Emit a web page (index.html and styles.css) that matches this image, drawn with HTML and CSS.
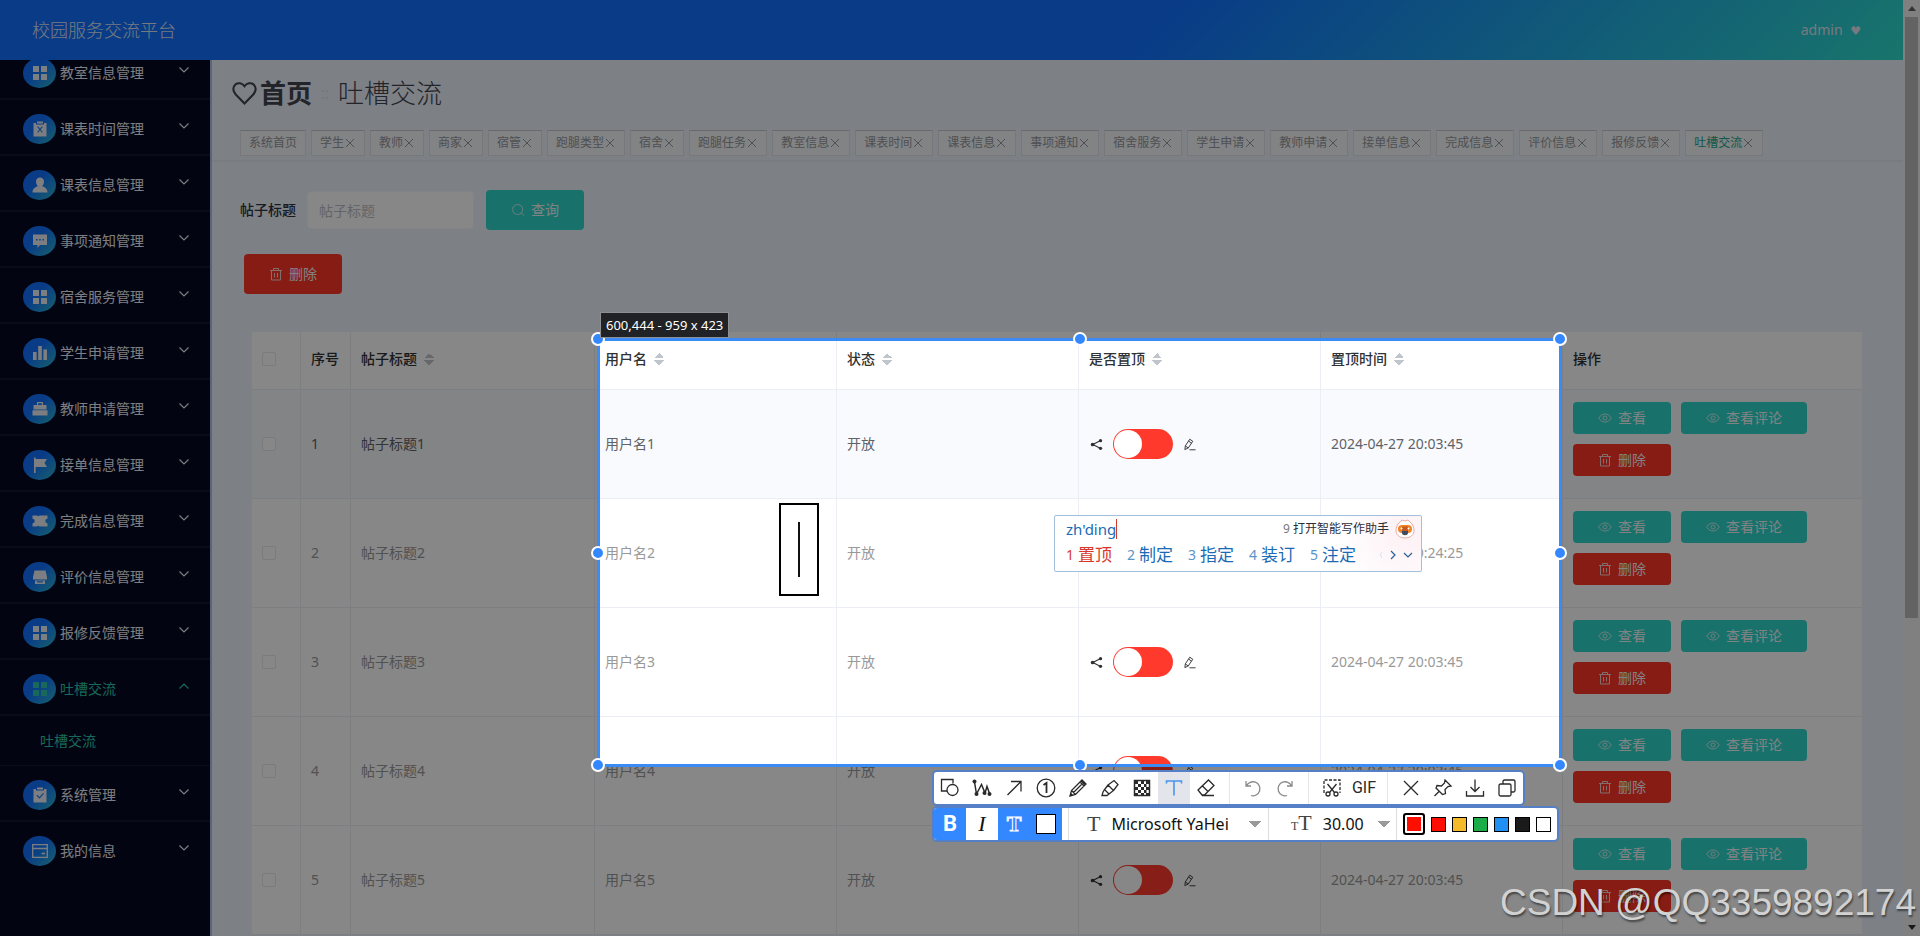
FILE: index.html
```html
<!DOCTYPE html>
<html lang="zh-CN">
<head>
<meta charset="utf-8">
<title>校园服务交流平台</title>
<link rel="stylesheet" href="styles.css">
</head>
<body>
<svg class="sprite" aria-hidden="true">
  <symbol id="i-grid" viewBox="0 0 16 16"><path fill="currentColor" d="M1 1h6v6H1zM9 1h6v6H9zM1 9h6v6H1zM9 9h6v6H9z"/></symbol>
  <symbol id="i-release" viewBox="0 0 16 16"><path fill="currentColor" fill-rule="evenodd" d="M1.500 2H4v1.500h8V2h2.500v13.500h-13zM5 .5h6v2H5zM5.300 6l2 2.500-2 2.500 .8.7L8 9.300l1.900 2.400.8-.7-2-2.500 2-2.500-.8-.7L8 7.700 6.100 5.300z"/></symbol>
  <symbol id="i-user" viewBox="0 0 16 16"><path fill="currentColor" d="M8 .5a4 4 0 0 1 4 4.200C12 7 10.500 9 10 9.300c3 .8 5.500 2.700 5.500 6.200H.5C.5 12 3 10.100 6 9.300 5.500 9 4 7 4 4.700A4 4 0 0 1 8 .5z"/></symbol>
  <symbol id="i-comment" viewBox="0 0 16 16"><path fill="currentColor" fill-rule="evenodd" d="M1 1.500h14V12H8l-2.500 3v-3H1zM4 6v1.500h1.500V6zM7.200 6v1.500h1.600V6zM10.500 6v1.500H12V6z"/></symbol>
  <symbol id="i-data" viewBox="0 0 16 16"><path fill="currentColor" d="M1 7h3.600v8H1zM6.200 1h3.600v14H6.200zM11.400 4.500H15V15h-3.600z"/></symbol>
  <symbol id="i-case" viewBox="0 0 16 16"><path fill="currentColor" fill-rule="evenodd" d="M5 4V1h6v3h3.500v4.500h-13V4zM6.200 4h3.600V2.200H6.200zM.5 9.300h15v5.200H.5z"/></symbol>
  <symbol id="i-flag" viewBox="0 0 16 16"><path fill="currentColor" d="M2 .5h1.600V2H15l-2.500 4L15 10H3.600v6H2z"/></symbol>
  <symbol id="i-ticket" viewBox="0 0 16 16"><path fill="currentColor" fill-rule="evenodd" d="M.5 2.500h4.700l1 1 1-1h8.300v3.300a2.200 2.200 0 0 0 0 4.400v3.300H7.200l-1-1-1 1H.5v-3.300a2.200 2.200 0 0 0 0-4.400z"/></symbol>
  <symbol id="i-shop" viewBox="0 0 16 16"><path fill="currentColor" fill-rule="evenodd" d="M2.500 1.500h11L15 8v2.500H1V8zM3 11.500h10V15H3zM5 12.300v1.200h6v-1.200z"/></symbol>
  <symbol id="i-claim" viewBox="0 0 16 16"><path fill="currentColor" fill-rule="evenodd" d="M1.500 2H4v1.500h8V2h2.500v13.500h-13zM5 .5h6v2H5zM4.400 8.500l3 3.200 4.600-4.900-.9-.8-3.700 4-2.100-2.300z"/></symbol>
  <symbol id="i-card" viewBox="0 0 16 16"><path fill="none" stroke="currentColor" stroke-width="1.300" d="M.7 1.700h14.600v12.600H.7zM.7 5.500h14.600M9.500 10.500h3.500"/></symbol>
  <symbol id="i-down" viewBox="0 0 12 8"><path fill="none" stroke="currentColor" stroke-width="1.200" d="M1.500 1.500L6 6l4.500-4.500"/></symbol>
  <symbol id="i-up" viewBox="0 0 12 8"><path fill="none" stroke="currentColor" stroke-width="1.200" d="M1.500 6.500L6 2l4.500 4.500"/></symbol>
  <symbol id="i-x" viewBox="0 0 12 12"><path fill="none" stroke="currentColor" d="M2 2l8 8M10 2l-8 8"/></symbol>
  <symbol id="i-heart" viewBox="0 0 24 24"><path fill="none" stroke="currentColor" stroke-width="2" d="M12 21.500L3.600 13C.5 9.800.6 5.600 3.300 3.300 6 1.200 9.800 1.900 12 5c2.200-3.100 6-3.800 8.700-1.700 2.700 2.300 2.800 6.500-.3 9.700z"/></symbol>
  <symbol id="i-search" viewBox="0 0 14 14"><path fill="none" stroke="currentColor" d="M10 10.200a5 5 0 1 1 .3-.3l2.700 2.900"/></symbol>
  <symbol id="i-trash" viewBox="0 0 14 14"><path fill="none" stroke="currentColor" d="M1 3.500h12M4.500 3V1.500h5V3M2.500 3.500v9.500h9V3.500M5.500 6v4.500M8.500 6v4.500"/></symbol>
  <symbol id="i-eye" viewBox="0 0 14 14"><path fill="none" stroke="currentColor" d="M.7 7C2.500 4.300 4.500 3 7 3s4.500 1.300 6.300 4C11.500 9.700 9.500 11 7 11S2.500 9.700.7 7zM9 7a2 2 0 1 1-4 0 2 2 0 0 1 4 0z"/></symbol>
  <symbol id="i-share" viewBox="0 0 14 14"><path fill="none" stroke="currentColor" stroke-width="1.200" d="M11.500 2.800L3 7l8.500 4.200"/><circle cx="11.300" cy="2.900" r="1.800" fill="currentColor"/><circle cx="2.800" cy="7" r="2" fill="currentColor"/><circle cx="11.300" cy="11.100" r="1.800" fill="currentColor"/></symbol>
  <symbol id="i-edit" viewBox="0 0 14 14"><path fill="none" stroke="currentColor" d="M2 12.500l.5-4L7.300 1.300 10.500 3.500 5.700 10.700zM6 3.300l3.200 2.200M2.500 8.600L5.700 10.700M7 12.700h6.500"/></symbol>
</svg>

<div class="app">
  <div class="page">
    <header class="topbar">
      <span class="brand">校园服务交流平台</span>
      <button class="account" type="button">admin <span class="account-mark">♥</span></button>
    </header>
    <div class="body">
      <nav class="sidebar" aria-label="主菜单">
        <ul class="menu">
          <li><a class="menu-item" href="#"><span class="badge"><svg><use href="#i-grid"/></svg></span><span>教室信息管理</span><svg class="arrow"><use href="#i-down"/></svg></a></li>
          <li><a class="menu-item" href="#"><span class="badge"><svg><use href="#i-release"/></svg></span><span>课表时间管理</span><svg class="arrow"><use href="#i-down"/></svg></a></li>
          <li><a class="menu-item" href="#"><span class="badge"><svg><use href="#i-user"/></svg></span><span>课表信息管理</span><svg class="arrow"><use href="#i-down"/></svg></a></li>
          <li><a class="menu-item" href="#"><span class="badge"><svg><use href="#i-comment"/></svg></span><span>事项通知管理</span><svg class="arrow"><use href="#i-down"/></svg></a></li>
          <li><a class="menu-item" href="#"><span class="badge"><svg><use href="#i-grid"/></svg></span><span>宿舍服务管理</span><svg class="arrow"><use href="#i-down"/></svg></a></li>
          <li><a class="menu-item" href="#"><span class="badge"><svg><use href="#i-data"/></svg></span><span>学生申请管理</span><svg class="arrow"><use href="#i-down"/></svg></a></li>
          <li><a class="menu-item" href="#"><span class="badge"><svg><use href="#i-case"/></svg></span><span>教师申请管理</span><svg class="arrow"><use href="#i-down"/></svg></a></li>
          <li><a class="menu-item" href="#"><span class="badge"><svg><use href="#i-flag"/></svg></span><span>接单信息管理</span><svg class="arrow"><use href="#i-down"/></svg></a></li>
          <li><a class="menu-item" href="#"><span class="badge"><svg><use href="#i-ticket"/></svg></span><span>完成信息管理</span><svg class="arrow"><use href="#i-down"/></svg></a></li>
          <li><a class="menu-item" href="#"><span class="badge"><svg><use href="#i-shop"/></svg></span><span>评价信息管理</span><svg class="arrow"><use href="#i-down"/></svg></a></li>
          <li><a class="menu-item" href="#"><span class="badge"><svg><use href="#i-grid"/></svg></span><span>报修反馈管理</span><svg class="arrow"><use href="#i-down"/></svg></a></li>
          <li><a class="menu-item is-active" href="#"><span class="badge"><svg><use href="#i-grid"/></svg></span><span>吐槽交流</span><svg class="arrow"><use href="#i-up"/></svg></a>
            <a class="submenu-item" href="#">吐槽交流</a></li>
          <li><a class="menu-item" href="#"><span class="badge"><svg><use href="#i-claim"/></svg></span><span>系统管理</span><svg class="arrow"><use href="#i-down"/></svg></a></li>
          <li><a class="menu-item is-last" href="#"><span class="badge"><svg><use href="#i-card"/></svg></span><span>我的信息</span><svg class="arrow"><use href="#i-down"/></svg></a></li>
        </ul>
      </nav>

      <main class="main">
        <div class="crumbs">
          <svg class="crumb-icon"><use href="#i-heart"/></svg>
          <a class="crumb-home" href="#">首页</a>
          <span class="crumb-sep">::</span>
          <span class="crumb-here">吐槽交流</span>
        </div>
        <div class="tabs">
          <a class="tab" href="#">系统首页</a>
          <a class="tab" href="#">学生<svg><use href="#i-x"/></svg></a>
          <a class="tab" href="#">教师<svg><use href="#i-x"/></svg></a>
          <a class="tab" href="#">商家<svg><use href="#i-x"/></svg></a>
          <a class="tab" href="#">宿管<svg><use href="#i-x"/></svg></a>
          <a class="tab" href="#">跑腿类型<svg><use href="#i-x"/></svg></a>
          <a class="tab" href="#">宿舍<svg><use href="#i-x"/></svg></a>
          <a class="tab" href="#">跑腿任务<svg><use href="#i-x"/></svg></a>
          <a class="tab" href="#">教室信息<svg><use href="#i-x"/></svg></a>
          <a class="tab" href="#">课表时间<svg><use href="#i-x"/></svg></a>
          <a class="tab" href="#">课表信息<svg><use href="#i-x"/></svg></a>
          <a class="tab" href="#">事项通知<svg><use href="#i-x"/></svg></a>
          <a class="tab" href="#">宿舍服务<svg><use href="#i-x"/></svg></a>
          <a class="tab" href="#">学生申请<svg><use href="#i-x"/></svg></a>
          <a class="tab" href="#">教师申请<svg><use href="#i-x"/></svg></a>
          <a class="tab" href="#">接单信息<svg><use href="#i-x"/></svg></a>
          <a class="tab" href="#">完成信息<svg><use href="#i-x"/></svg></a>
          <a class="tab" href="#">评价信息<svg><use href="#i-x"/></svg></a>
          <a class="tab" href="#">报修反馈<svg><use href="#i-x"/></svg></a>
          <a class="tab is-current" href="#">吐槽交流<svg><use href="#i-x"/></svg></a>
        </div>

        <form class="filter">
          <label for="post-title">帖子标题</label>
          <input id="post-title" class="filter-input" type="text" placeholder="帖子标题">
          <button class="btn btn-tall" type="button"><svg><use href="#i-search"/></svg>查询</button>
        </form>
        <div class="bulk">
          <button class="btn btn-tall btn-danger" type="button"><svg><use href="#i-trash"/></svg>删除</button>
        </div>

        <table class="grid">
          <colgroup><col class="c-check"><col class="c-no"><col class="c-title"><col><col><col><col><col class="c-ops"></colgroup>
          <thead>
            <tr>
              <th><input class="check" type="checkbox" aria-label="全选"></th>
              <th>序号</th>
              <th>帖子标题<span class="sort"></span></th>
              <th>用户名<span class="sort"></span></th>
              <th>状态<span class="sort"></span></th>
              <th>是否置顶<span class="sort"></span></th>
              <th>置顶时间<span class="sort"></span></th>
              <th>操作</th>
            </tr>
          </thead>
          <tbody>
            <tr class="is-hover">
              <td><input class="check" type="checkbox" aria-label="选择1"></td><td>1</td><td>帖子标题1</td><td>用户名1</td><td>开放</td>
              <td><div class="pin"><svg><use href="#i-share"/></svg><input class="switch" type="checkbox" role="switch" aria-label="置顶1"><svg><use href="#i-edit"/></svg></div></td>
              <td>2024-04-27 20:03:45</td>
              <td><div class="ops"><button class="btn" type="button"><svg><use href="#i-eye"/></svg>查看</button><button class="btn" type="button"><svg><use href="#i-eye"/></svg>查看评论</button><button class="btn btn-danger" type="button"><svg><use href="#i-trash"/></svg>删除</button></div></td>
            </tr>
            <tr>
              <td><input class="check" type="checkbox" aria-label="选择2"></td><td>2</td><td>帖子标题2</td><td>用户名2</td><td>开放</td>
              <td><div class="pin"><svg><use href="#i-share"/></svg><input class="switch" type="checkbox" role="switch" aria-label="置顶2"><svg><use href="#i-edit"/></svg></div></td>
              <td>2024-04-27 20:24:25</td>
              <td><div class="ops"><button class="btn" type="button"><svg><use href="#i-eye"/></svg>查看</button><button class="btn" type="button"><svg><use href="#i-eye"/></svg>查看评论</button><button class="btn btn-danger" type="button"><svg><use href="#i-trash"/></svg>删除</button></div></td>
            </tr>
            <tr>
              <td><input class="check" type="checkbox" aria-label="选择3"></td><td>3</td><td>帖子标题3</td><td>用户名3</td><td>开放</td>
              <td><div class="pin"><svg><use href="#i-share"/></svg><input class="switch" type="checkbox" role="switch" aria-label="置顶3"><svg><use href="#i-edit"/></svg></div></td>
              <td>2024-04-27 20:03:45</td>
              <td><div class="ops"><button class="btn" type="button"><svg><use href="#i-eye"/></svg>查看</button><button class="btn" type="button"><svg><use href="#i-eye"/></svg>查看评论</button><button class="btn btn-danger" type="button"><svg><use href="#i-trash"/></svg>删除</button></div></td>
            </tr>
            <tr>
              <td><input class="check" type="checkbox" aria-label="选择4"></td><td>4</td><td>帖子标题4</td><td>用户名4</td><td>开放</td>
              <td><div class="pin"><svg><use href="#i-share"/></svg><input class="switch" type="checkbox" role="switch" aria-label="置顶4"><svg><use href="#i-edit"/></svg></div></td>
              <td>2024-04-27 20:03:45</td>
              <td><div class="ops"><button class="btn" type="button"><svg><use href="#i-eye"/></svg>查看</button><button class="btn" type="button"><svg><use href="#i-eye"/></svg>查看评论</button><button class="btn btn-danger" type="button"><svg><use href="#i-trash"/></svg>删除</button></div></td>
            </tr>
            <tr>
              <td><input class="check" type="checkbox" aria-label="选择5"></td><td>5</td><td>帖子标题5</td><td>用户名5</td><td>开放</td>
              <td><div class="pin"><svg><use href="#i-share"/></svg><input class="switch" type="checkbox" role="switch" aria-label="置顶5"><svg><use href="#i-edit"/></svg></div></td>
              <td>2024-04-27 20:03:45</td>
              <td><div class="ops"><button class="btn" type="button"><svg><use href="#i-eye"/></svg>查看</button><button class="btn" type="button"><svg><use href="#i-eye"/></svg>查看评论</button><button class="btn btn-danger" type="button"><svg><use href="#i-trash"/></svg>删除</button></div></td>
            </tr>
          </tbody>
        </table>
      </main>
    </div>
  </div>
  <div class="scrollbar" aria-hidden="true">
    <span class="sb-up"></span><span class="sb-thumb"></span><span class="sb-down"></span>
  </div>
</div>

<!-- Screen capture layer -->
<div class="selection">
  <i class="knob nw"></i><i class="knob n"></i><i class="knob ne"></i>
  <i class="knob w"></i><i class="knob e"></i>
  <i class="knob sw"></i><i class="knob s"></i><i class="knob se"></i>
</div>
<div class="size-tip">600,444 - 959 x 423</div>
<div class="text-mark"><span></span></div>

<div class="ime">
  <div class="ime-top">
    <span class="ime-input">zh'ding</span>
    <span class="ime-help"><span class="ime-nine">9</span> 打开智能写作助手</span>
    <svg class="ime-bot" viewBox="0 0 20 20"><path d="M5 3l2-2 3 1 3-1 2 2c3 2 4 6 4 9s-3 7-9 7-9-4-9-7 1-7 4-9z" fill="#fff" stroke="#e9a9a0"/><rect x="3" y="6" width="14" height="8" rx="4" fill="#f08322"/><path d="M7 7.500h6v4.500c0 2-6 2-6 0z" fill="#c8591f"/><path d="M7 12h6v2c0 3-6 3-6 0z" fill="#3f4a63"/><circle cx="6.500" cy="9.500" r="1" fill="#fff"/><circle cx="13.500" cy="9.500" r="1" fill="#fff"/></svg>
  </div>
  <div class="ime-row">
    <span class="cand is-first"><b>1</b>置顶</span>
    <span class="cand"><b>2</b>制定</span>
    <span class="cand"><b>3</b>指定</span>
    <span class="cand"><b>4</b>装订</span>
    <span class="cand"><b>5</b>注定</span>
    <svg class="ime-nav" viewBox="0 0 36 12"><path fill="none" stroke="#d3e2f2" d="M3 3a4 4 0 0 0 0 6"/><path fill="none" stroke="#2a5f96" stroke-width="1.200" d="M12 2l4 4-4 4M25 4l4 4 4-4"/></svg>
  </div>
</div>

<div class="tools tools-main">
  <button type="button" aria-label="形状"><svg viewBox="0 0 20 20"><path d="M7 13H1.500V1.500h11.500v4"/><circle cx="12.500" cy="12" r="5.500"/></svg></button>
  <button type="button" aria-label="折线"><svg viewBox="0 0 20 20"><path stroke-width="1.500" d="M2.500 3.500l1.500 13L14 5.500l3.500 10.500M2.500 3.500l9 12L14 5.500" stroke-opacity="0"/><path stroke-width="1.500" d="M2.500 4l2 12L9.500 6.500l3.500 8.500 2-6.500 2.500 7"/><g class="solid"><circle cx="2.500" cy="3.500" r="2"/><circle cx="4.500" cy="16" r="2"/><circle cx="12.500" cy="15" r="2"/><circle cx="17.500" cy="16" r="2"/></g></svg></button>
  <button type="button" aria-label="箭头"><svg viewBox="0 0 20 20"><path d="M3.500 17L16.500 4M7 3.500h10v10"/></svg></button>
  <button type="button" aria-label="序号"><svg viewBox="0 0 20 20"><circle cx="10" cy="10" r="8.800"/><path stroke-width="1.800" d="M7.500 7L10.500 5v10"/></svg></button>
  <button type="button" aria-label="铅笔"><svg viewBox="0 0 20 20"><path d="M2 18l1.500-5.500L14 2l4 4L7.500 16.500zM3.500 12.500l4 4M12 4l4 4M5.500 14.500l8.500-8.500"/><path class="solid" d="M2 18l1-3 2 2zM12.500 3.500L14 2l4 4-1.500 1.500z"/></svg></button>
  <button type="button" aria-label="记号笔"><svg viewBox="0 0 20 20"><path d="M2 17.500h5l2-1.500-4.500-4.500L3 14zM5 11l3-4 5.500 5.500-4.500 3.500M8 7l6-4.500L18 6.500l-4.500 6"/></svg></button>
  <button type="button" aria-label="马赛克"><svg viewBox="0 0 20 20"><path stroke-width="1.500" d="M2.500 2.500h15v15h-15z"/><path class="solid" d="M3 3h3v3H3zM9 3h3v3H9zM14 3h3v3h-3zM6 6h3v3H6zM12 6h2.500v3H12zM3 9h3v3H3zM9 9h3v3H9zM14 9h3v3h-3zM6 12h3v3H6zM12 12h2.500v3H12zM3 15h3v2H3zM9 15h3v2H9zM14 15h3v2h-3z"/></svg></button>
  <button class="is-on" type="button" aria-label="文字"><svg viewBox="0 0 20 20"><path stroke-width="1.600" d="M2.500 5.500V3h15v2.500M10 3v14.500"/></svg></button>
  <button type="button" aria-label="橡皮"><svg viewBox="0 0 20 20"><path d="M2 12L12.500 2l5.500 5.500-9.500 9.500H6zM6.500 8l5.500 5.500M6 17.500h12"/></svg></button>
  <span class="rule"></span>
  <button class="is-dim" type="button" aria-label="撤销"><svg viewBox="0 0 20 20"><path d="M3 3v5h5M3.500 8A7 7 0 1 1 8 17.500"/></svg></button>
  <button class="is-dim" type="button" aria-label="重做"><svg viewBox="0 0 20 20"><path d="M17 3v5h-5M16.500 8A7 7 0 1 0 12 17.500"/></svg></button>
  <span class="rule"></span>
  <button type="button" aria-label="裁剪"><svg viewBox="0 0 20 20"><path stroke-dasharray="3 1.500" d="M2 15V2h16v13"/><path d="M5.500 6l7 8.500M14.500 6l-7 8.500"/><circle cx="6" cy="16" r="2"/><circle cx="14" cy="16" r="2"/></svg></button>
  <button class="gif" type="button">GIF</button>
  <span class="rule"></span>
  <button type="button" aria-label="关闭"><svg viewBox="0 0 20 20"><path d="M3 3l14 14M17 3L3 17"/></svg></button>
  <button type="button" aria-label="钉住"><svg viewBox="0 0 20 20"><path d="M12 2l6 6-3 .5-3 3 .5 4-3 1L3 10l1-2.500 4.500.5 3-3zM6 13.500L1.500 18"/></svg></button>
  <button type="button" aria-label="保存"><svg viewBox="0 0 20 20"><path d="M10 1.500V13M5.500 9L10 13.500 14.500 9M1.500 13v5h17v-5"/></svg></button>
  <button type="button" aria-label="复制"><svg viewBox="0 0 20 20"><rect x="2" y="6" width="12" height="12" rx="1.500"/><path d="M6 6V3.500Q6 2 7.500 2h9Q18 2 18 3.500v9q0 1.500-1.500 1.500H14"/></svg></button>
</div>

<div class="tools tools-text">
  <button class="is-fill t-bold" type="button">B</button>
  <button class="t-italic" type="button">I</button>
  <button class="is-fill t-outline" type="button">T</button>
  <button class="is-fill" type="button" aria-label="背景"><span class="box"></span></button>
  <label class="field field-font"><span class="t-serif">T</span>
    <select aria-label="字体"><option>Microsoft YaHei</option></select></label>
  <label class="field field-size"><span class="t-serif"><small>T</small>T</span>
    <select aria-label="字号"><option>30.00</option></select></label>
  <div class="swatches">
    <button class="swatch red is-picked" type="button" aria-label="当前颜色"></button>
    <button class="swatch red" type="button" aria-label="红"></button>
    <button class="swatch yellow" type="button" aria-label="黄"></button>
    <button class="swatch green" type="button" aria-label="绿"></button>
    <button class="swatch blue" type="button" aria-label="蓝"></button>
    <button class="swatch black" type="button" aria-label="黑"></button>
    <button class="swatch white" type="button" aria-label="白"></button>
  </div>
</div>

<div class="watermark">CSDN @QQ3359892174</div>
</body>
</html>
```
FILE: styles.css
```css
* { box-sizing: border-box; }

body {
  margin: 0;
  overflow: hidden;
  font: 14px/20px "Noto Sans", "Noto Sans CJK SC", sans-serif;
  color: #606266;
}

a { color: inherit; text-decoration: none; }
button, input, select { font: inherit; margin: 0; }
button { cursor: pointer; }
.sprite { display: none; }

.app { display: flex; height: 100vh; overflow: hidden; }
.page { flex: 1; min-width: 0; display: flex; flex-direction: column; }

/* Top bar */
.topbar {
  flex: none;
  display: flex;
  align-items: center;
  justify-content: space-between;
  height: 60px;
  padding: 0 42px 0 32px;
  background: linear-gradient(135deg, #1170ff 0%, #1170ff 60%, #2fdccb 100%);
  color: #dfe6f2;
}
.brand { font-size: 18px; font-weight: 300; }
.account { padding: 0; border: 0; background: none; color: inherit; }
.account-mark { margin-left: 4px; font-family: "DejaVu Sans", sans-serif; font-size: 12px; }

.body { flex: 1; min-height: 0; display: flex; }

/* Sidebar */
.sidebar { flex: none; width: 210px; overflow: hidden; background: #050920; }
.menu { list-style: none; margin: -16px 0 0; padding: 0; }
.menu-item {
  display: flex;
  align-items: center;
  gap: 4px;
  height: 56px;
  padding: 4px 20px 0 23px;
  border-bottom: 2px solid #14182e;
  color: #eceef4;
}
.menu-item.is-last { border-bottom-color: transparent; }
.badge {
  flex: none;
  display: grid;
  place-items: center;
  width: 33px;
  height: 30px;
  border-radius: 50%;
  background: linear-gradient(135deg, #1170ff 40%, #2fb8cc);
}
.badge svg { width: 16px; height: 16px; }
.arrow { width: 12px; height: 8px; margin: 0 0 6px auto; }
.menu-item.is-active, .submenu-item { color: #2fc6ac; }
.submenu-item {
  display: flex;
  align-items: center;
  height: 50px;
  padding-left: 40px;
  border-bottom: 1px solid #14182e;
}

/* Main column */
.main {
  flex: 1;
  min-width: 0;
  overflow: hidden;
  border-left: 2px solid #a9c0e6;
  background: #edf2fb;
}
.crumbs {
  display: flex;
  align-items: center;
  height: 64px;
  padding: 2px 20px 0;
  font-size: 26px;
  line-height: 36px;
  color: #40444f;
}
.crumb-icon { width: 25px; height: 25px; }
.crumb-home { margin-left: 3px; font-weight: 700; }
.crumb-sep { width: 26px; text-align: center; color: #dde2ea; font-size: 16px; }
.crumb-here { font-weight: 300; }

.tabs {
  display: flex;
  gap: 5px;
  padding: 6px 28px 4px;
  border-bottom: 2px solid #e5e9f1;
}
.tab {
  flex: none;
  display: flex;
  align-items: center;
  height: 26px;
  padding: 0 8px;
  border: 1px solid #e2e3e6;
  border-top-color: #c4c6ca;
  background: #f6f7f9;
  font-size: 12px;
  color: #94979d;
}
.tab svg { width: 12px; height: 12px; }
.tab.is-current { color: #1fa78c; }
.tab.is-current svg { color: #94979d; }

.filter { display: flex; align-items: center; margin: 28px 28px 0; }
.filter label { font-weight: 500; color: #303340; }
.filter-input {
  width: 167px;
  height: 38px;
  margin: 0 12px 0 11px;
  padding: 0 11px;
  border: 1px solid #f5f7fa;
  border-radius: 4px;
  background: #fff;
}
.filter-input::placeholder { color: #bcbec4; }
.bulk { margin: 24px 32px 0; }

.btn {
  display: inline-flex;
  align-items: center;
  justify-content: center;
  gap: 6px;
  min-width: 98px;
  height: 32px;
  padding: 0 25px;
  border: 0;
  border-radius: 4px;
  background: #2fd6cb;
  color: #f4f7f7;
}
.btn svg { flex: none; width: 14px; height: 14px; opacity: .8; }
.btn-tall { height: 40px; }
.btn-danger { background: #ff3527; }

/* Posts table */
.grid {
  table-layout: fixed;
  width: calc(100% - 81px);
  margin: 38px 41px 0 40px;
  border-spacing: 0;
  background: #fff;
  color: #999;
}
.c-check { width: 49px; }
.c-no { width: 50px; }
.c-title { width: 244px; }
.c-ops { width: 299px; }
.grid th, .grid td {
  padding: 0 0 0 10px;
  border-right: 1px solid #ebeef5;
  border-bottom: 1px solid #ebeef5;
  text-align: left;
}
.grid th:last-child, .grid td:last-child { border-right: 0; }
.grid th { height: 58px; padding-bottom: 4px; font-weight: 500; color: #303133; }
.grid td { height: 109px; }
.is-hover td { background: #f8fafe; color: #606266; }
.check {
  appearance: none;
  display: block;
  width: 14px;
  height: 14px;
  border: 1px solid #e6e8ec;
  border-radius: 2px;
  background: #fff;
}
.sort {
  display: inline-block;
  width: 10px;
  height: 12px;
  margin-left: 7px;
  vertical-align: -1px;
  background:
    conic-gradient(from 135deg at 50% 0, #c0c4cc 90deg, transparent 0) 0 0 / 10px 5px no-repeat,
    conic-gradient(from -45deg at 50% 100%, #c0c4cc 90deg, transparent 0) 0 7px / 10px 5px no-repeat;
}
.pin { display: flex; align-items: center; gap: 10px; padding-left: 1px; color: #303133; }
.pin svg { width: 13px; height: 13px; }
.switch {
  appearance: none;
  width: 60px;
  height: 30px;
  padding: 1px;
  border-radius: 15px;
  background: #ff3a2c;
}
.switch::before {
  content: "";
  display: block;
  width: 28px;
  height: 28px;
  border-radius: 50%;
  background: #fff;
}
.ops { display: flex; flex-wrap: wrap; gap: 10px; padding: 2px 10px 12px 0; }

/* Page scrollbar */
.scrollbar {
  flex: none;
  display: flex;
  flex-direction: column;
  align-items: center;
  width: 17px;
  padding: 6px 0;
  background: #f1f1f1;
}
.sb-up, .sb-down { border: 4px solid transparent; }
.sb-up { border-top: 0; border-bottom: 5px solid #606060; }
.sb-down { margin-top: auto; border-bottom: 0; border-top: 5px solid #303030; }
.sb-thumb { width: 13px; height: 65%; margin-top: 6px; background: #bcbcbc; }

/* Capture selection */
.selection {
  position: absolute;
  left: 597px;
  top: 338px;
  width: 965px;
  height: 429px;
  border: 3px solid #3b8bf5;
  box-shadow: 0 0 0 2000px rgba(0, 0, 0, .47);
}
.knob {
  position: absolute;
  width: 14px;
  height: 14px;
  margin: -7px;
  border: 2px solid #fff;
  border-radius: 50%;
  background: #3388ff;
}
.nw, .w, .sw { left: -2px; }
.n, .s { left: 50%; }
.ne, .e, .se { left: calc(100% + 1px); }
.nw, .n, .ne { top: -2px; }
.w, .e { top: 50%; }
.sw, .s, .se { top: calc(100% + 1px); }

.size-tip {
  position: absolute;
  left: 600px;
  top: 312px;
  padding: 2px 5px;
  border: 1px solid #8d8f92;
  background: #202226;
  color: #fff;
  font-size: 13px;
}
.text-mark {
  position: absolute;
  left: 779px;
  top: 503px;
  display: grid;
  place-items: center;
  width: 40px;
  height: 93px;
  border: 2px solid #000;
  background: #fff;
}
.text-mark span { width: 2px; height: 55px; background: #111; }

/* Input method popup */
.ime {
  position: absolute;
  left: 1054px;
  top: 515px;
  width: 368px;
  height: 57px;
  padding: 1px 6px 0 11px;
  border: 1px solid #a3bfd9;
  border-radius: 2px;
  background: radial-gradient(circle at 96% 30%, #fdf0f4, #fff 20%);
  color: #1b6ab5;
}
.ime-top, .ime-row { display: flex; align-items: center; }
.ime-top { height: 24px; }
.ime-input { border-right: 1px solid #d43a2a; font-size: 15px; line-height: 20px; }
.ime-help { margin-left: auto; color: #2b2f3a; font-size: 12px; }
.ime-nine { color: #777; }
.ime-bot { width: 20px; height: 20px; margin-left: 6px; }
.ime-row { gap: 15px; height: 28px; }
.cand { display: flex; align-items: center; gap: 4px; font-size: 17px; }
.cand b { font-weight: 400; font-size: 14px; color: #5b93c6; }
.cand.is-first, .cand.is-first b { color: #d8392b; }
.ime-nav { width: 36px; height: 12px; margin-left: auto; }

/* Capture toolbars */
.tools {
  position: absolute;
  left: 934px;
  display: flex;
  align-items: center;
  height: 32px;
  border-radius: 3px;
  background: #fff;
  box-shadow: 0 0 0 2px #5580c8;
  overflow: hidden;
  color: #2a2a2a;
}
.tools-main { top: 772px; }
.tools-text { top: 808px; color: #111; font-size: 16px; }
.tools > button {
  display: grid;
  place-items: center;
  width: 32px;
  height: 32px;
  padding: 0;
  border: 0;
  background: none;
  color: inherit;
}
.tools svg { width: 20px; height: 20px; fill: none; stroke: currentColor; stroke-width: 1.3; }
.tools .solid { fill: currentColor; stroke: none; }
.tools > .is-on { background: #e4e5ea; color: #4a94ee; }
.tools > .is-dim { color: #8a8a8a; }
.tools > .gif { font-family: Roboto, sans-serif; font-size: 16px; }
.rule { width: 1px; height: 32px; margin: 0 7px; background: #e6e6e6; }
.tools > .is-fill { background: #3388ff; color: #fff; }
.tools > .t-bold { font: 700 22px/32px Roboto, sans-serif; }
.tools > .t-italic { font: italic 22px/32px "Liberation Serif", serif; }
.tools > .t-outline {
  font: 700 22px/32px "Liberation Serif", serif;
  color: #3388ff;
  -webkit-text-stroke: 1px #fff;
}
.box { width: 20px; height: 20px; border: 1px solid #000; background: #fff; }
.field { display: flex; align-items: center; height: 32px; }
.field-font { width: 200px; margin-left: 6px; padding: 0 6px 0 18px; border-left: 1px solid #ddd; }
.field-size { width: 128px; padding: 0 5px 0 22px; border-left: 1px solid #ddd; }
.t-serif { font: 22px/32px "Liberation Serif", serif; color: #444; }
.t-serif small { font-size: 12px; }
.field select {
  appearance: none;
  flex: 1;
  min-width: 0;
  height: 28px;
  margin-left: 7px;
  padding: 0 4px;
  border: 0;
  background: conic-gradient(from -45deg at 50% 100%, #999 90deg, transparent 0) 100% 50% / 14px 7px no-repeat;
  color: #111;
}
.swatches { display: flex; align-items: center; gap: 6px; padding: 0 6px; border-left: 1px solid #ddd; height: 32px; }
.swatch { width: 15px; height: 15px; padding: 0; border: 1px solid #000; }
.swatch.is-picked { width: 22px; height: 22px; border: 2px solid #000; border-radius: 3px; box-shadow: inset 0 0 0 2px #fff; }
.red { background: #ff0d00; }
.yellow { background: #f5b92c; }
.green { background: #1aad48; }
.blue { background: #2090f5; }
.black { background: #1a1a1a; }
.white { background: #fff; }

.watermark {
  position: absolute;
  right: 4px;
  bottom: 11px;
  font: 37px/44px "Liberation Sans", Arial, sans-serif;
  color: #d2d2d2;
  text-shadow: 1px 2px 2px rgba(0, 0, 0, .5);
  white-space: nowrap;
}
```
